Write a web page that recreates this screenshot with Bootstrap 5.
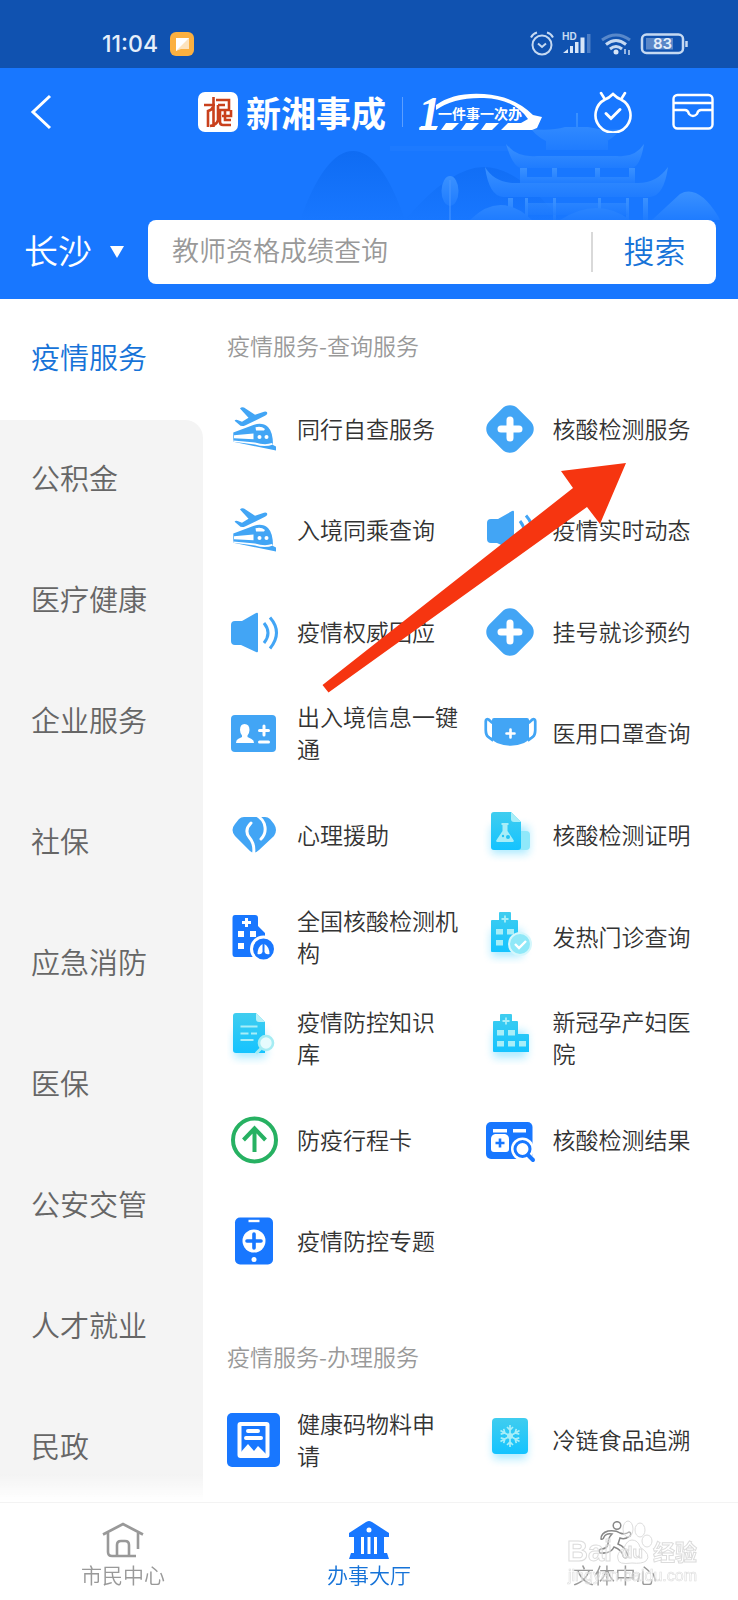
<!DOCTYPE html>
<html lang="zh-CN">
<head>
<meta charset="utf-8">
<meta name="viewport" content="width=device-width, initial-scale=1">
<title>办事大厅 - 新湘事成</title>
<link href="https://cdn.jsdelivr.net/npm/bootstrap@5.3.0/dist/css/bootstrap.min.css" rel="stylesheet">
<style>
  body { font-family: "Noto Sans CJK SC", sans-serif; font-weight: 350; color: #333; background: #fff; }
  a, button { color: inherit; text-decoration: none; font-weight: inherit; }
  svg { display: block; flex: none; }
  .app { height: 100vh; }
  .statusbar { background: #1052b0; color: #e6effa; height: 68px; padding: 20px 48px 0 102px; }
  .clock-text { font: 500 23px/1 Inter, sans-serif; }
  .app-header { background: #1877ff; color: #fff; }
  .header-art { right: 0; top: 68px; }
  .title-row { height: 88px; padding: 0 24px 0 27px; }
  .brand { margin-left: 143px; }
  .brand-name { font-size: 35px; line-height: 40px; font-weight: 700; }
  .brand-rule { width: 1px; height: 30px; background: #5c9fff; }
  .icon-btn { border: 0; background: none; padding: 0; }
  .search-row { padding: 64px 22px 15px 24px; }
  .city-select { border: 0; background: none; color: #fff; font-size: 34px; font-weight: 350; line-height: 44px; appearance: none; width: 70px; padding: 0 0 4px; }
  .search-box { background: #fff; border-radius: 8px; height: 64px; }
  .search-box input { border: 0; outline: 0; background: none; font-size: 27px; font-weight: 350; padding: 0 0 4px 24px; min-width: 0; }
  .search-box input::placeholder { color: #999; opacity: 1; }
  .search-box button { border: 0; background: none; color: #1673d8; font-size: 31px; width: 123px; line-height: 40px; padding: 0 0 4px; }
  .search-rule { width: 2px; height: 40px; background: #d9d9d9; }
  .main-area { min-height: 0; }
  .side-menu { width: 203px; overflow-y: auto; scrollbar-width: none; font-size: 29px; color: #666; background: #f4f4f4; }
  .side-menu::-webkit-scrollbar, .services::-webkit-scrollbar { display: none; }
  .side-menu a { height: 121px; flex: none; padding: 0 0 5px 31px; background: #f4f4f4; }
  .side-menu a.current { color: #1673d8; background: #fff; }
  .side-menu .corner { background: #fff; flex: none; }
  .side-menu .corner a { border-top-right-radius: 18px; }
  .side-fade { left: 0; bottom: 0; width: 203px; height: 28px; background: linear-gradient(#fff0, #fff); }
  .services { overflow-y: auto; scrollbar-width: none; padding: 29px 0 9px 24px; }
  .services h2 { font-size: 23px; line-height: 34px; font-weight: 350; color: #999; margin: 0 0 16px; }
  .service-grid { display: grid; grid-template-columns: 1fr 1fr; grid-auto-rows: 1fr; }
  .service-grid.full { min-height: 914px; margin-bottom: 47px; }
  .service-grid.short { min-height: 102px; }
  .service-grid a { gap: 16px; font-size: 23px; line-height: 32px; }
  .service-grid a span { padding-bottom: 2px; }
  .pointer-arrow { left: 95px; top: 85px; pointer-events: none; }
  .tabbar { height: 98px; border-top: 1px solid #f3f3f3; background: #fff; font-size: 21px; line-height: 30px; color: #999; }
  .tabbar a { padding-top: 18px; }
  .tabbar a.current { color: #1673d8; }
  .watermark { right: 36px; bottom: 8px; pointer-events: none; }
</style>
</head>
<body>
<svg width="0" height="0" class="position-absolute" aria-hidden="true">
  <defs>
    <linearGradient id="cy" x1="0" y1="0" x2="0" y2="1"><stop offset="0" stop-color="#40cdef"/><stop offset="1" stop-color="#14c3ff"/></linearGradient>
    <filter id="glow" x="-40%" y="-40%" width="180%" height="200%"><feGaussianBlur stdDeviation="4"/></filter>
    <symbol id="i-trip" viewBox="0 0 54 54">
      <path fill="#42a5f5" d="M13 6.500Q14.500 4.500 17 5.600L28 12.700 37 9.700Q40.500 9 40.300 11.300 40 13 38 13.800L18 23.600Q14 25 12 22.600L7.600 18.700Q8.500 17.200 10.500 18L15 19.700 21.500 15.800Z"/>
      <path fill="#42a5f5" d="M6.300 30.500 25 23.400Q35 19.500 41 25 46 30 46 43L49 44.400V48.500L6.300 39.700Z"/>
      <path fill="#fff" d="M7 33.300 26.500 31.500V37.300L7 36.200ZM28.500 25.300Q34 23.500 38 27L37 28.600H29ZM6.300 38.600 28 40.500Q38 43.500 45 41L46 42.500Q38 45.500 28 42.500L6.300 39.700Z"/>
      <circle cx="32.500" cy="35" r="2" fill="#fff"/><circle cx="39.500" cy="35" r="2" fill="#fff"/>
    </symbol>
    <symbol id="i-plus" viewBox="0 0 54 54">
      <rect x="7" y="7" width="40" height="40" rx="11" fill="#42a5f5" transform="rotate(45 27 27)"/>
      <path d="M27 18v18M18 27h18" stroke="#fff" stroke-width="7" stroke-linecap="round"/>
    </symbol>
    <symbol id="i-sound" viewBox="0 0 54 54">
      <path fill="#42a5f5" d="M8 16h7L29 8q2-1 2 1v37q0 2-2 1L14 40H8q-4 0-4-4V20q0-4 4-4z"/>
      <path d="M37 18q8 10 0 20M43 12.500q13 15 0 31" fill="none" stroke="#42a5f5" stroke-width="3"/>
    </symbol>
  </defs>
</svg>

<div class="app d-flex flex-column">
  <div class="statusbar d-flex justify-content-between align-items-center flex-shrink-0">
    <div class="d-flex align-items-center gap-2">
      <span class="clock-text">11:04</span>
      <svg width="24" height="24" viewBox="0 0 24 24" class="ms-1"><rect width="24" height="24" rx="6" fill="#fbb040"/><path d="M6 6h13v11h-8l-5 2z" fill="#fde3bd"/><path d="M6 6h13L6 19z" fill="#fff"/></svg>
    </div>
    <svg width="160" height="26" viewBox="530 31 160 26" fill="none" stroke="#c5d9f2" role="img" aria-label="状态">
      <circle cx="542" cy="45" r="9.500" stroke-width="2"/><path d="M538 43.500l4 3.500 4-3.500M531 37.500q2-4 6-5M553 37.500q-2-4-6-5" stroke-width="2"/>
      <text x="562" y="40" font-family="Inter,sans-serif" font-size="10" font-weight="700" fill="#c5d9f2" stroke="none">HD</text>
      <g stroke="none" fill="#d8e6f8"><path d="M563 53l5-4v4zM570 46h3v7h-3zM575 42h3.500v11H575zM580.500 37.500h4V53h-4z"/><path d="M587 34h3.500v19H587z" opacity=".3"/></g>
      <path d="M602 40q14-10 28 0" stroke-width="3" opacity=".4"/><path d="M606 44.500q10-8 20 0M610 49q6-5 12 0" stroke-width="3"/><circle cx="616" cy="52" r="2.500" fill="#d8e6f8" stroke="none"/><path d="M625 49v5M629 50v5" stroke-width="1.500"/>
      <rect x="642" y="34.500" width="41" height="18.500" rx="4.500" stroke-width="2.500"/><rect x="646" y="38" width="27" height="11.500" fill="#5a87c8" stroke="none"/><path d="M686.500 41v6" stroke-width="2.500"/>
      <text x="653" y="49" font-family="Inter,sans-serif" font-size="15" font-weight="600" fill="#e6effa" stroke="none">83</text>
    </svg>
  </div>

  <header class="app-header flex-shrink-0">
    <svg class="header-art position-absolute" width="478" height="152" viewBox="260 68 478 152" aria-hidden="true">
      <defs><linearGradient id="roof" x1="0" y1="0" x2="0" y2="1"><stop offset="0" stop-color="#3a91ff"/><stop offset="1" stop-color="#1f7cff"/></linearGradient>
      <linearGradient id="hill" x1="0" y1="0" x2="0" y2="1"><stop offset="0" stop-color="#0f6cf3"/><stop offset="1" stop-color="#1877ff"/></linearGradient></defs>
      <path d="M300 220Q325 151 353 151T405 220ZM405 220Q450 167 484 167T560 220Z" fill="url(#hill)"/>
      <path d="M390 146h120v5H390z" fill="#1d7aff"/>
      <g fill="url(#roof)">
        <path d="M576 113h2v14h-2zM531 129q20 2 34-2h23q16 4 33 2-8 10-18 14h-52q-12-4-20-14zM546 141h62v9h-62z"/>
        <path d="M506 144q11 14 31 12h80q18 2 27-12-4 24-13 24H522q-9 0-16-24z"/>
        <path d="M520 168h7v16h-7zM552 168h5v16h-5zM595 168h5v16h-5zM629 168h6v16h-6zM520 177h115v6H520z"/>
        <path d="M485 167q10 17 34 16h117q20 1 32-16-4 29-18 30H503q-14-1-18-30z"/>
        <path d="M508 198h5v22h-5zM525 198h3v22h-3zM553 198h3v22h-3zM598 198h3v22h-3zM626 198h3v22h-3zM643 198h5v22h-5z"/>
        <path d="M528 203h100v12H528z" opacity=".5"/>
        <path d="M470 220q30-30 62 0zM560 220q38-24 70 0zM652 220q15-14 28-26 18-10 38 22l2 4z"/>
        <ellipse cx="450" cy="191" rx="8.500" ry="15"/><path d="M449.500 180h1v40h-1z" fill="#4a98ff"/>
      </g>
    </svg>
    <div class="title-row position-relative d-flex align-items-center justify-content-between">
      <button class="icon-btn" type="button" aria-label="返回"><svg width="28" height="36" viewBox="0 0 28 36"><path d="M23 2 6 18l17 16" fill="none" stroke="#fff" stroke-width="3"/></svg></button>
      <div class="brand d-flex align-items-center gap-2 me-auto">
        <svg width="40" height="40" viewBox="0 0 40 40"><rect width="40" height="40" rx="7" fill="#fff"/><path d="M6 13h11M15.500 5v30M15 15q-1 3-5 4v16M20 13v15q-1 5-8 6M18 8h13v10H22v12q0 3 3 3h8M20 13h7M24 24h9v-6M27 18v10h6" fill="none" stroke="#c9401c" stroke-width="2.600"/></svg>
        <span class="brand-name">新湘事成</span>
        <span class="brand-rule ms-2"></span>
        <svg width="124" height="40" viewBox="417 93 124 40" class="ms-2 overflow-visible" fill="#fff">
          <text x="416" y="130" font-family="Liberation Serif,serif" font-size="46" font-weight="700" font-style="italic">1</text>
          <path d="M434 106Q452 93 482 95T531 116l9 2-5 11-5 2H499l7-7h13l7-4Q512 100 482 99T434 111ZM444 124h13l-5 5-2 2H439zM464 124h13l-5 5-2 2H459zM484 124h13l-5 5-2 2H479zM419 127h17l-2 4H417z"/>
          <text x="436" y="120" font-size="14" font-weight="700" font-family="Noto Sans CJK SC,sans-serif">一件事一次办</text>
        </svg>
      </div>
      <div class="d-flex align-items-center">
        <button class="icon-btn me-4" type="button" aria-label="待办"><svg width="38" height="42" viewBox="1 0 38 42" fill="none" stroke="#fff" stroke-width="2.600" stroke-linecap="round"><path d="M20 3q-4 4-8 5.500A17.500 17.500 0 1 0 28 8.500Q24 7 20 3zM8 2l4 6.500M32 2l-4 6.500"/><path d="M13 22.500l5 5 9-9" stroke-width="3"/></svg></button>
        <button class="icon-btn ms-3" type="button" aria-label="卡包"><svg width="42" height="38" viewBox="0 0 42 38" fill="none" stroke="#fff" stroke-width="2.400"><rect x="1.500" y="2" width="39" height="33.500" rx="4"/><path d="M2 10h38M2 17h11q3 0 4 4 4 4 8 0 1-4 4-4h11"/></svg></button>
      </div>
    </div>
    <form class="search-row position-relative d-flex align-items-center">
      <select class="city-select" aria-label="城市"><option>长沙</option></select>
      <svg width="14" height="12" viewBox="0 0 14 12" class="ms-3" aria-hidden="true"><path d="M0 0h14L7 12z" fill="#fff"/></svg>
      <div class="search-box d-flex align-items-center flex-fill ms-4">
        <input class="flex-fill" type="search" aria-label="搜索内容" placeholder="教师资格成绩查询">
        <span class="search-rule"></span>
        <button type="submit">搜索</button>
      </div>
    </form>
  </header>

  <main class="main-area position-relative d-flex flex-fill">
    <nav class="side-menu d-flex flex-column flex-shrink-0" aria-label="分类">
      <a class="current d-flex align-items-center" href="#">疫情服务</a>
      <div class="corner"><a class="d-flex align-items-center" href="#">公积金</a></div>
      <a class="d-flex align-items-center" href="#">医疗健康</a>
      <a class="d-flex align-items-center" href="#">企业服务</a>
      <a class="d-flex align-items-center" href="#">社保</a>
      <a class="d-flex align-items-center" href="#">应急消防</a>
      <a class="d-flex align-items-center" href="#">医保</a>
      <a class="d-flex align-items-center" href="#">公安交管</a>
      <a class="d-flex align-items-center" href="#">人才就业</a>
      <a class="d-flex align-items-center" href="#">民政</a>
    </nav>
    <div class="side-fade position-absolute"></div>

    <div class="services flex-fill">
      <h2>疫情服务-查询服务</h2>
      <div class="service-grid full position-relative">
        <a class="d-flex align-items-center" href="#"><svg width="54" height="54"><use href="#i-trip"/></svg><span>同行自查服务</span></a>
        <a class="d-flex align-items-center" href="#"><svg width="54" height="54"><use href="#i-plus"/></svg><span>核酸检测服务</span></a>
        <a class="d-flex align-items-center" href="#"><svg width="54" height="54"><use href="#i-trip"/></svg><span>入境同乘查询</span></a>
        <a class="d-flex align-items-center" href="#"><svg width="54" height="54"><use href="#i-sound"/></svg><span>疫情实时动态</span></a>
        <a class="d-flex align-items-center" href="#"><svg width="54" height="54"><use href="#i-sound"/></svg><span>疫情权威回应</span></a>
        <a class="d-flex align-items-center" href="#"><svg width="54" height="54"><use href="#i-plus"/></svg><span>挂号就诊预约</span></a>
        <a class="d-flex align-items-center" href="#">
          <svg width="54" height="54" viewBox="0 0 54 54"><rect x="4" y="9" width="45" height="37" rx="4" fill="#42a5f5"/><path fill="#fff" d="M17.500 18q5 0 5 6 0 3-2 5.500v1.500l4 2q2.500 1 2.500 4H9q0-3 2-4l4-2v-1.500q-2-2.500-2-5.500 0-6 4.500-6z"/><path d="M37 20v9M32.500 24.500h9M32.500 36h9" stroke="#fff" stroke-width="3" stroke-linecap="round"/></svg>
          <span>出入境信息一键<br>通</span></a>
        <a class="d-flex align-items-center" href="#">
          <svg width="54" height="54" viewBox="0 0 54 54"><path fill="#42a5f5" d="M11 12h33q2 0 2 2v19q-1 2-5 4-13 5.500-27 0-4-2-5-4V14q0-2 2-2z"/><path d="M9.500 17 5.500 13.500Q3 12.500 2.800 15V24q0 5 2.500 7l5 3.500M45.500 17l4-3.500q2.500-1 2.700 1.500V24q0 5-2.500 7l-5 3.500" fill="none" stroke="#42a5f5" stroke-width="2.800"/><path d="M4.500 16l3.500 2.500V31l-2-1.500q-1.500-2-1.500-5zM50.500 16 47 18.500V31l2-1.500q1.500-2 1.500-5z" fill="#fff"/><path d="M27.500 23.500v8M23.500 27.500h8" stroke="#fff" stroke-width="2.600" stroke-linecap="round"/></svg>
          <span>医用口罩查询</span></a>
        <a class="d-flex align-items-center" href="#">
          <svg width="54" height="54" viewBox="0 0 54 54"><path fill="#42a5f5" d="M17 9H38Q41 9 43 11L47 16Q51 22 47 28L32 42Q27 47 23 43L8 28Q3 22 8 16L12 11Q14 9 17 9z"/><path d="M24 15q-7 7-2 14 7 8 4 20M29 7q8 4 9 12 1 7-4 12" fill="none" stroke="#fff" stroke-width="3" stroke-linecap="round"/></svg>
          <span>心理援助</span></a>
        <a class="d-flex align-items-center" href="#">
          <svg width="54" height="54" viewBox="0 0 54 54"><rect x="8" y="18" width="38" height="28" rx="4" fill="#16c5ff" opacity=".35" filter="url(#glow)"/><rect x="32" y="23" width="15" height="19" rx="4" fill="#8fe8fa"/><path fill="url(#cy)" d="M11 4h17l10 10v25q0 3-3 3H11q-3 0-3-3V7q0-3 3-3z"/><path d="M28 4v7q0 3 3 3h7z" fill="#a8eef8"/><path d="M18.500 15h7v2h-1v6l6 9q1 2-1 2H14.500q-2 0-1-2l6-9v-6h-1z" fill="#a8eef8"/><circle cx="20" cy="28" r="1.200" fill="#22c4f5"/><circle cx="25" cy="29" r="2" fill="#22c4f5"/></svg>
          <span>核酸检测证明</span></a>
        <a class="d-flex align-items-center" href="#">
          <svg width="54" height="54" viewBox="0 0 54 54"><path fill="#1877ff" d="M8 5h20q3 0 3 3v8l7 7v24H8q-2.500 0-2.500-3V8q0-3 2.500-3z"/><path fill="#fff" d="M18 8h3v3h3v3h-3v3h-3v-3h-3v-3h3zM11 21h6v6h-6zM23 21h6v6h-6zM11 33h6v6h-6z"/><circle cx="36.500" cy="39" r="12" fill="#1877ff" stroke="#fff" stroke-width="3"/><path fill="#fff" d="M35.500 34v8q-1 3-5 2 0-7 5-10zM37.500 34v8q1 3 5 2 0-7-5-10z"/></svg>
          <span>全国核酸检测机<br>构</span></a>
        <a class="d-flex align-items-center" href="#">
          <svg width="54" height="54" viewBox="0 0 54 54"><rect x="8" y="20" width="32" height="27" rx="4" fill="#16c5ff" opacity=".35" filter="url(#glow)"/><path fill="url(#cy)" d="M17 2h10q1 0 1 1v7h6q1 0 1 1v31H9q-1 0-1-1V11q0-1 1-1h7V3q0-1 1-1z"/><path d="M22 5.500v7M18.500 9h7" stroke="#a8eef8" stroke-width="1.800"/><path fill="#a8eef8" d="M13 19h7v5.500h-7zM24 19h7v5.500h-7zM13 30h7v5.500h-7z"/><circle cx="37" cy="34" r="11" fill="#8fe8f8" stroke="#d5f7fc" stroke-width="2"/><path d="M32 34l4 4 7-7" fill="none" stroke="#fff" stroke-width="2.400"/></svg>
          <span>发热门诊查询</span></a>
        <a class="d-flex align-items-center" href="#">
          <svg width="54" height="54" viewBox="0 0 54 54"><rect x="7" y="20" width="32" height="27" rx="4" fill="#16c5ff" opacity=".35" filter="url(#glow)"/><path fill="url(#cy)" d="M9 2h20l9 9v31H9q-3 0-3-3V5q0-3 3-3z"/><path d="M29 2v6q0 3 3 3h6z" fill="#b8f1f8"/><path d="M13.500 15.500h17M13.500 22.500h8M24 22.500h6M13.500 29h13" stroke="#a8eef8" stroke-width="2"/><circle cx="39" cy="32" r="7" fill="#e6fbfd" stroke="#a5ecf3" stroke-width="2.600"/><path d="M34 37.500l-5 5" stroke="#a5ecf3" stroke-width="3"/></svg>
          <span>疫情防控知识<br>库</span></a>
        <a class="d-flex align-items-center" href="#">
          <svg width="54" height="54" viewBox="0 0 54 54"><rect x="10" y="20" width="34" height="27" rx="4" fill="#16c5ff" opacity=".35" filter="url(#glow)"/><path fill="url(#cy)" d="M18 3h10q1 0 1 1v6h5q1 0 1 1v12h10q1 0 1 1v17H11q-1 0-1-1V11q0-1 1-1h6V4q0-1 1-1z"/><path d="M23 6.500v7M19.500 10h7" stroke="#a8eef8" stroke-width="1.800"/><path fill="#a8eef8" d="M14 19h7v5.500h-7zM25 19h7v5.500h-7zM14 30h7v5.500h-7zM25 30h7v5.500h-7zM36 30h7v5.500h-7z"/></svg>
          <span>新冠孕产妇医<br>院</span></a>
        <a class="d-flex align-items-center" href="#">
          <svg width="54" height="54" viewBox="0 0 54 54" fill="none" stroke="#27b162"><circle cx="27.500" cy="27" r="21.500" stroke-width="4"/><path d="M27.500 39V15M16.500 27l11-11.500 11 11.500" stroke-width="4"/></svg>
          <span>防疫行程卡</span></a>
        <a class="d-flex align-items-center" href="#">
          <svg width="54" height="54" viewBox="0 0 54 54"><rect x="3" y="9" width="46.500" height="37" rx="5" fill="#1877ff"/><path fill="#fff" d="M10 16h14v3.500H10zM12 21h10q4 1 4 5v10q0 3-3 3H11q-3 0-3-3V26q0-4 4-5zM30 16h13v3.500H30z"/><path d="M17 25.500v9M12.500 30h9" stroke="#1877ff" stroke-width="2.600"/><circle cx="39.500" cy="36" r="11.500" fill="#fff"/><circle cx="39.500" cy="36" r="7.500" fill="#fff" stroke="#1877ff" stroke-width="3"/><path d="M45 42l5 5" stroke="#1877ff" stroke-width="4" stroke-linecap="round"/></svg>
          <span>核酸检测结果</span></a>
        <a class="d-flex align-items-center" href="#">
          <svg width="54" height="54" viewBox="0 0 54 54"><rect x="8" y="3.500" width="38" height="47" rx="5" fill="#1877ff"/><path d="M21.500 7h11" stroke="#fff" stroke-width="2.400"/><circle cx="27" cy="27" r="11.500" fill="#fff"/><path d="M27 20v14M20 27h14" stroke="#1877ff" stroke-width="3.600" stroke-linecap="round"/><circle cx="27" cy="45.500" r="2.500" fill="#fff"/></svg>
          <span>疫情防控专题</span></a>
        <svg class="pointer-arrow position-absolute" width="305" height="230" viewBox="322 463 305 230" aria-hidden="true"><path d="M322.500 685 573 488 561 471 626 463 600 524 587 507 328.500 692.500Z" fill="#f63510"/></svg>
      </div>

      <h2>疫情服务-办理服务</h2>
      <div class="service-grid short">
        <a class="d-flex align-items-center" href="#">
          <svg width="54" height="54" viewBox="0 0 54 54"><rect width="53" height="54" rx="5" fill="#1877ff"/><rect x="12.500" y="11" width="28" height="32" fill="none" stroke="#fff" stroke-width="4" rx="1"/><path d="M21 18h10M19 25h15" stroke="#fff" stroke-width="4" stroke-linecap="round" fill="none"/><path fill="#fff" d="M14 39l7-8 6 7 4-5 8 8v3H14z"/></svg>
          <span>健康码物料申<br>请</span></a>
        <a class="d-flex align-items-center" href="#">
          <svg width="54" height="54" viewBox="0 0 54 54"><rect x="10" y="18" width="34" height="28" rx="4" fill="#16c5ff" opacity=".35" filter="url(#glow)"/><rect x="9" y="5" width="36" height="36" rx="4" fill="url(#cy)"/><g fill="none" stroke="#a8eef8" stroke-width="1.700"><path id="fl" d="M27 12v22M24 14l3 3 3-3M24 32l3-3 3 3"/><use href="#fl" transform="rotate(60 27 23)"/><use href="#fl" transform="rotate(120 27 23)"/></g><circle cx="27" cy="23" r="3" fill="#a8eef8"/></svg>
          <span>冷链食品追溯</span></a>
      </div>
    </div>
  </main>

  <nav class="tabbar position-relative d-flex flex-shrink-0" aria-label="主导航">
    <a class="d-flex flex-column align-items-center col" href="#">
      <svg width="42" height="38" viewBox="0 0 42 38" fill="none" stroke="#999" stroke-width="2.600"><path d="M1 13.500 21 3l20 10.500M6 12v19q0 4 4 4h24M36 12v16"/><path d="M15 35V24q0-4 4-4h4q4 0 4 4v11"/></svg>
      <span>市民中心</span></a>
    <a class="current d-flex flex-column align-items-center col" href="#">
      <svg width="42" height="38" viewBox="0 -2 42 38"><path fill="#1877ff" fill-rule="evenodd" d="M21-2q1 0 3 1l17 11v4h-5v16h3l2 6H1l2-6h3V14H1v-4L18-1q2-1 3-1zM13 14v17h3V14zM19.500 14v17h3V14zM26 14v17h3V14zM18.500 7a2.500 2.500 0 1 0 5 0 2.500 2.500 0 1 0-5 0z"/></svg>
      <span>办事大厅</span></a>
    <a class="d-flex flex-column align-items-center col" href="#">
      <svg width="42" height="38" viewBox="0 0 42 38" fill="none" stroke="#888" stroke-width="1.500"><circle cx="23" cy="4.500" r="3.800"/><path d="M7 18q0-6 7-8 8-1 12 2 5 2 9-1 3 1 1 4-5 4-10 2l-2 6q8 3 10 12-3 4-5 0-1-6-9-9-3 7-14 6-2-3 1-4 6 0 7-5 0-6 4-10-6-1-8 3-1 3-3 2z"/></svg>
      <span>文体中心</span></a>
    <svg class="watermark position-absolute" width="136" height="74" viewBox="564 1518 136 74" aria-hidden="true">
      <g fill="#fff" fill-opacity=".35" stroke="#dcdcdc" stroke-width="1">
        <ellipse cx="626" cy="1529" rx="5" ry="8"/><ellipse cx="638" cy="1530" rx="5" ry="7"/><ellipse cx="645" cy="1541" rx="5" ry="6"/>
        <path d="M630 1540q6 0 8 7 12 8 6 14-4 3-14 2-14 2-14-4-2-6 6-11 3-8 8-8z"/>
        <text x="565" y="1561" font-family="Liberation Sans,sans-serif" font-weight="700" font-size="29">Bai</text>
        <text x="620" y="1558" font-family="Liberation Sans,sans-serif" font-weight="700" font-size="17">du</text>
        <text x="651" y="1560" font-family="Noto Sans CJK SC,sans-serif" font-weight="700" font-size="22">经验</text>
        <text x="566" y="1581" font-family="Liberation Sans,sans-serif" font-size="16" stroke-width=".6">jingyan.baidu.com</text>
      </g>
    </svg>
  </nav>
</div>
<script src="https://cdn.jsdelivr.net/npm/bootstrap@5.3.0/dist/js/bootstrap.bundle.min.js"></script>
</body>
</html>
